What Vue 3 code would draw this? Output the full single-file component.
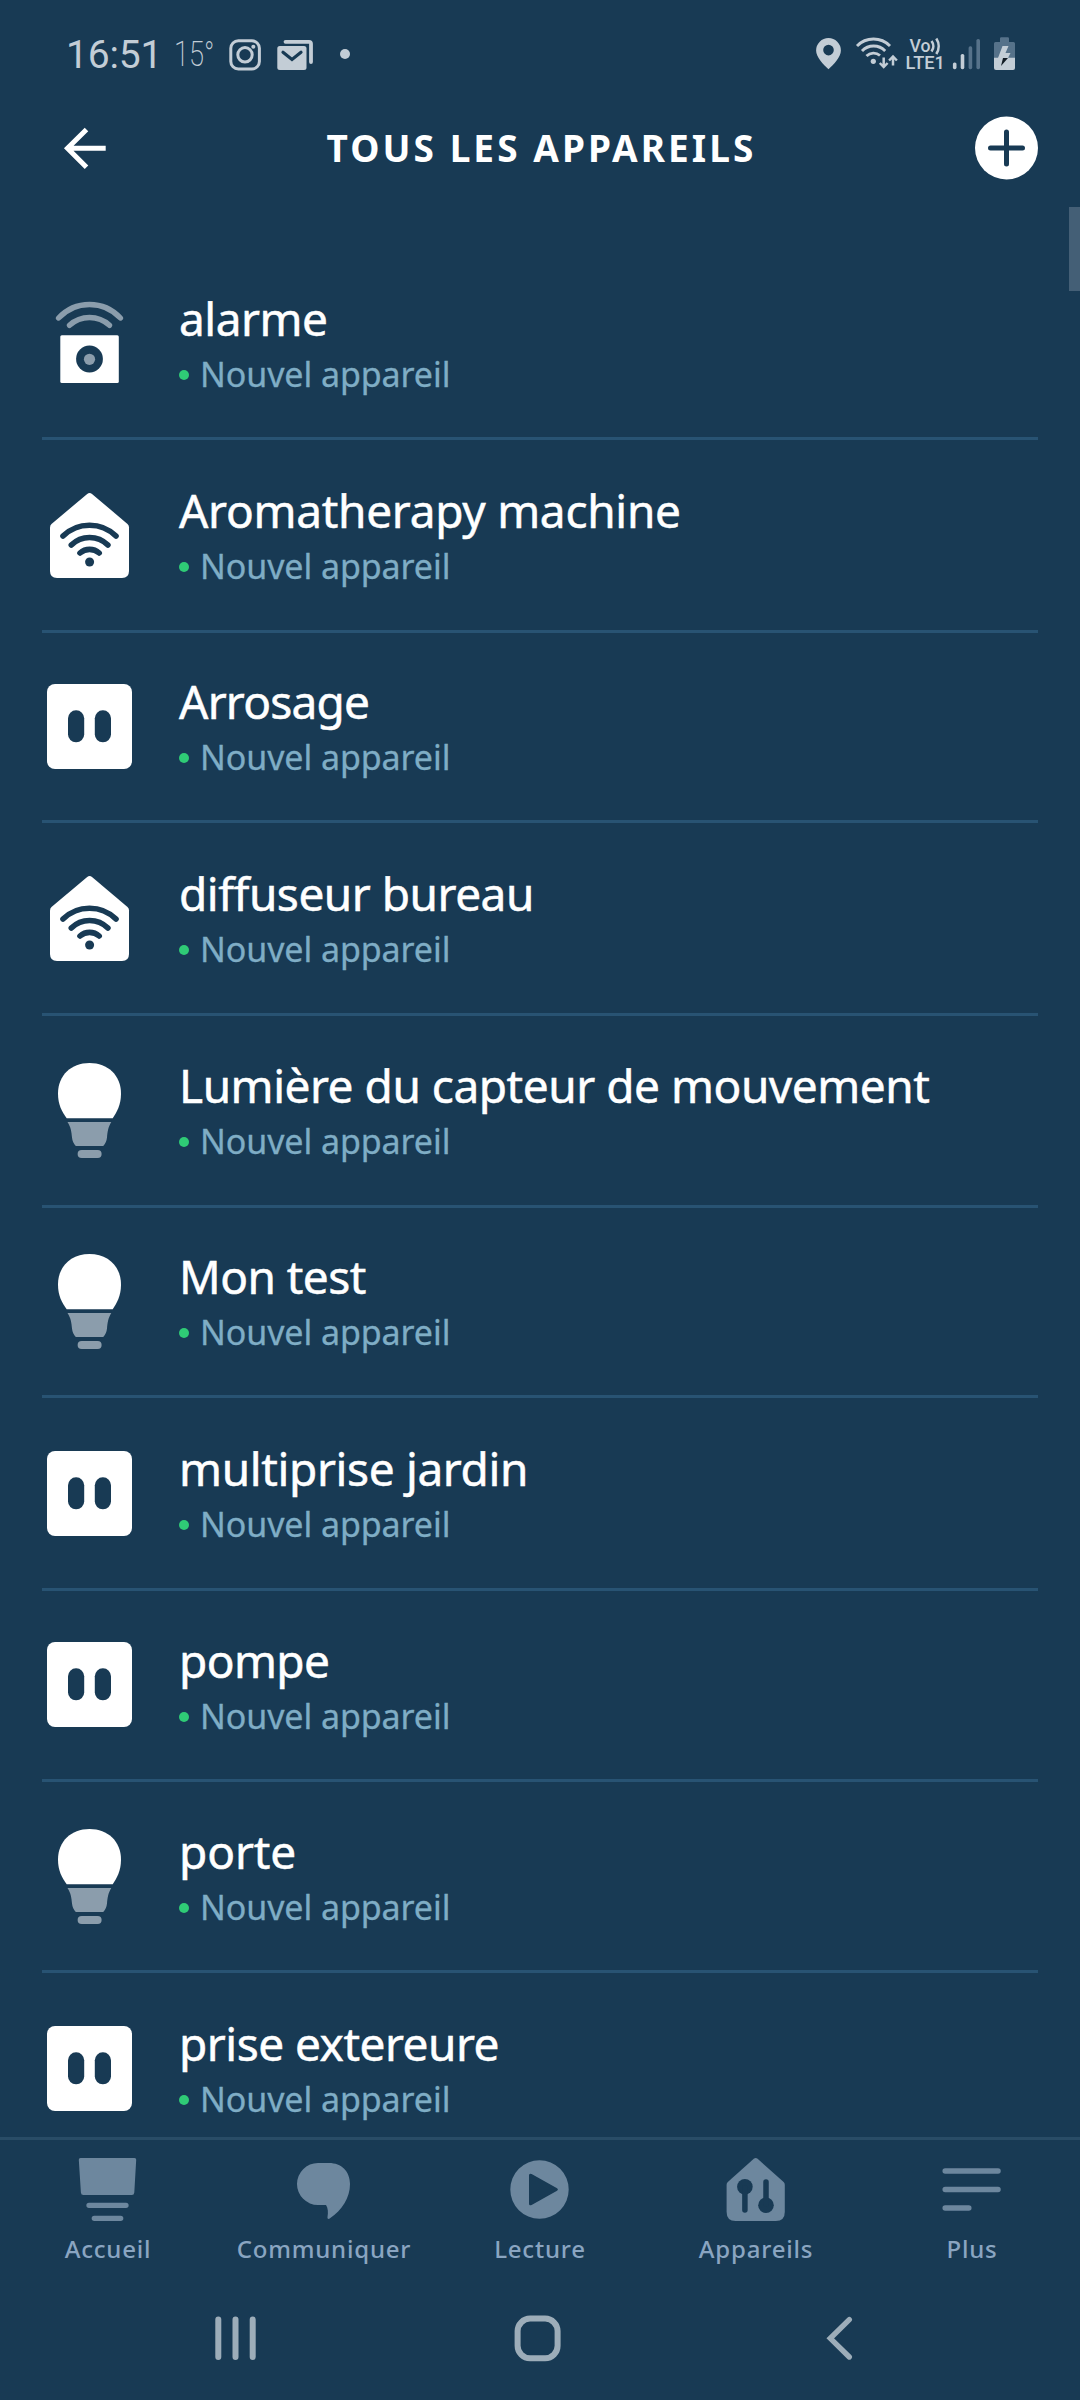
<script setup>
const devices = [
  { name: 'alarme', icon: 'camera', spacing: -0.5 },
  { name: 'Aromatherapy machine', icon: 'house', spacing: -0.28 },
  { name: 'Arrosage', icon: 'plug', spacing: -0.76 },
  { name: 'diffuseur bureau', icon: 'house', spacing: -0.48 },
  { name: 'Lumière du capteur de mouvement', icon: 'bulb', spacing: -0.47 },
  { name: 'Mon test', icon: 'bulb', spacing: -0.55 },
  { name: 'multiprise jardin', icon: 'plug', spacing: -0.36 },
  { name: 'pompe', icon: 'plug', spacing: -0.6 },
  { name: 'porte', icon: 'bulb', spacing: -0.1 },
  { name: 'prise extereure', icon: 'plug', spacing: -0.5 },
]
const tabs = [
  { label: 'Accueil', icon: 'home' },
  { label: 'Communiquer', icon: 'chat' },
  { label: 'Lecture', icon: 'play' },
  { label: 'Appareils', icon: 'devices' },
  { label: 'Plus', icon: 'more' },
]
</script>

<template>
  <div class="screen">
    <div class="status">
      <span class="clock">16:51</span>
      <span class="temp">15°</span>
      <svg class="insta" width="34" height="34" viewBox="228 38 34 34" fill="none" stroke="#c3cdd6" stroke-width="3">
        <rect x="230.8" y="40.8" width="28.6" height="28.2" rx="7.5" />
        <circle cx="245" cy="54.8" r="7.2" />
        <circle cx="253.3" cy="46.7" r="2" fill="#c3cdd6" stroke="none" />
      </svg>
      <svg class="mail" width="38" height="34" viewBox="276 38 38 34" fill="#c3cdd6">
        <rect x="277.3" y="46" width="29.2" height="24" rx="2.5" />
        <path d="M283 52.3l9 7.2 9-7.2" fill="none" stroke="#183a54" stroke-width="3.2" stroke-linecap="round" />
        <path d="M285.5 41.8H309q2 0 2 2V62" fill="none" stroke="#c3cdd6" stroke-width="3.8" stroke-linecap="round" />
      </svg>
      <i class="more-dot"></i>
      <svg class="right" width="202" height="40" viewBox="815 34 202 40" fill="#c3cdd6">
        <path fill-rule="evenodd" d="M828.5 38a12.4 12.4 0 0 0-12.4 12.4c0 6.6 7.1 13.8 12.4 18.8 5.3-5 12.4-12.2 12.4-18.8A12.4 12.4 0 0 0 828.5 38zm0 6.8a5.3 5.3 0 1 1 0 10.600 5.300 5.300 0 0 1 0-10.600z" />
        <g fill="none" stroke="#c3cdd6" stroke-width="2.9">
          <path d="M857 46a23 23 0 0 1 33 0M862 51a16 16 0 0 1 23.2 0M866.5 56a10 10 0 0 1 13.5-.5" />
          <path d="M883.7 57.5v9.500M879.8 63l3.9 4 3.9-4M893 65.5V56.5M889.100 60.500l3.900-4 3.900 4" stroke-width="2.5" />
          <path d="M931.5 41a8.500 8.500 0 0 1 0 10.500M936.300 38.500a14 14 0 0 1 0 15.500" stroke-width="2.6" />
        </g>
        <circle cx="873.3" cy="61.3" r="2.6" />
        <text x="909.5" y="51.5" textLength="21" lengthAdjust="spacingAndGlyphs" class="net">Vo</text>
        <text x="905.5" y="69" textLength="39.5" lengthAdjust="spacingAndGlyphs" class="net">LTE1</text>
        <rect x="952.9" y="62.5" width="3.6" height="6.7" rx="1.6" />
        <rect x="960.7" y="54" width="3.6" height="15.2" rx="1.6" />
        <g fill="#56728a">
          <rect x="968.6" y="46.3" width="3.6" height="22.9" rx="1.6" />
          <rect x="976.4" y="39" width="3.6" height="30.2" rx="1.6" />
          <path d="M1000 42v-3.500q0-1.200 1.200-1.200h6.600q1.200 0 1.200 1.200V42h4.500q1.500 0 1.500 1.500V58h-21V43.500q0-1.500 1.500-1.500z" />
        </g>
        <path d="M994 57.800h21V68q0 2-2 2h-17q-2 0-2-2z" />
        <path d="M1002.500 46h6l-3 7h5l-2.500 5h-10z" />
        <path d="M1003 58h5l-7 8z" fill="#111b24" />
      </svg>
    </div>

    <header class="header">
      <svg width="48" height="48" viewBox="61 124 48 48" fill="none" stroke="#fff" stroke-width="5">
        <path d="M105.700 148.300H68M86.500 129.400l-19 18.900 19 19" />
      </svg>
      <h1>TOUS LES APPAREILS</h1>
      <svg width="64" height="64" viewBox="0 0 64 64">
        <circle cx="31.500" cy="32" r="31.500" fill="#fff" />
        <path d="M31.500 16v32M15.500 32h32" stroke="#183a54" stroke-width="5" stroke-linecap="round" />
      </svg>
    </header>

    <main class="list">
      <div v-for="d in devices" :key="d.name" class="row">
        <svg class="dev" width="100" height="110" viewBox="0 0 100 110" fill="#fff">
          <g v-if="d.icon === 'camera'">
            <g fill="none" stroke="#8b9dac" stroke-width="5.400" stroke-linecap="round">
              <path d="M18.600 30a42 42 0 0 1 61.800 0" />
              <path d="M29.500 37.300a29.500 29.500 0 0 1 40 0" />
            </g>
            <rect x="20.300" y="47.300" width="58.500" height="47.700" rx="1.500" />
            <circle cx="49.500" cy="71" r="13.400" fill="#183a54" />
            <circle cx="49.500" cy="71.300" r="5.600" fill="#8b9dac" />
          </g>
          <g v-else-if="d.icon === 'house'">
            <path d="M47.200 13.900q2.400-1.800 4.800 0L87.500 44q1.500 1.300 1.500 3.500V91q0 7-7 7H17q-7 0-7-7V47.500q0-2.200 1.500-3.500z" />
            <g fill="none" stroke="#183a54" stroke-width="5.600" stroke-linecap="round">
              <path d="M23 56a38 38 0 0 1 53 0" />
              <path d="M31.300 65a26 26 0 0 1 36.600 0" />
              <path d="M40 73a14.500 14.500 0 0 1 19.200 0" />
            </g>
            <circle cx="49.600" cy="82" r="4.500" fill="#183a54" />
          </g>
          <g v-else-if="d.icon === 'plug'">
            <rect x="7" y="12" width="85" height="85" rx="8" />
            <rect x="28" y="38.300" width="16.200" height="32" rx="8" fill="#183a54" />
            <rect x="54.800" y="38.300" width="16.200" height="32" rx="8" fill="#183a54" />
          </g>
          <g v-else>
            <path d="M26.700 63.300C22 56.500 18 50 18 38.500 18 20.500 31 8 49.500 8S81 20.500 81 38.500C81 50 77 56.500 72.700 63.300z" />
            <g fill="#8b9dac">
              <path d="M27.500 67h43.800C68 72.500 67.500 77 67 82.500q-.6 5.500-3.800 8.500H35.800q-3.200-3-3.800-8.500C31.500 77 31 72.500 27.500 67z" />
              <rect x="37.600" y="95" width="24" height="8" rx="4" />
            </g>
          </g>
        </svg>
        <div class="text">
          <div class="name" :style="{ letterSpacing: d.spacing + 'px' }">{{ d.name }}</div>
          <div class="sub"><i></i><span>Nouvel appareil</span></div>
        </div>
      </div>
      <div class="scroll"></div>
    </main>

    <nav class="tabs">
      <div v-for="t in tabs" :key="t.label" class="tab">
        <svg width="72" height="72" viewBox="0 0 72 72" fill="#6d879e">
          <g v-if="t.icon === 'home'">
            <path d="M8.500 8h54q1.800 0 1.700 1.800L62.300 42.500q-.2 2.500-2.500 2.500H11.500q-2.500 0-2.600-2.500L6.800 9.800Q6.700 8 8.500 8z" />
            <path d="M17 55.300h37M22.300 68.300h26.400" stroke="#6d879e" stroke-width="5.300" stroke-linecap="round" />
          </g>
          <path v-else-if="t.icon === 'chat'" d="M30 13h11c12.500 0 21 8.500 21 21 0 14-8 26-20 34.300-1.500 1.200-2.800.5-2.500-1.300.8-4.500.6-9-1.500-12h-8a21 21 0 0 1 0-42z" />
          <path v-else-if="t.icon === 'play'" fill-rule="evenodd" d="M35.500 10.300a29.200 29.200 0 1 1 0 58.400 29.200 29.200 0 0 1 0-58.400zM25 25.500v28q0 2.800 2.600 1.400l25-13.900q2.600-1.500 0-3l-25-13.900Q25 22.700 25 25.500z" />
          <g v-else-if="t.icon === 'devices'">
            <path d="M33.800 8.700q1.900-1.500 3.800 0L63.600 32q1.200 1.200 1.200 3v27q0 9-9 9H15.600q-9 0-9-9V35q0-1.800 1.200-3z" />
            <g fill="#183a54" stroke="#183a54" stroke-linecap="round">
              <circle cx="24.900" cy="36.700" r="7.800" stroke="none" />
              <circle cx="46" cy="55.300" r="7.800" stroke="none" />
              <path d="M24.900 38v22M46 32v22" stroke-width="5.500" />
            </g>
          </g>
          <path v-else d="M9.200 21H62M9.200 39.600H62M9.200 58h23.600" stroke="#6d879e" stroke-width="5.500" stroke-linecap="round" />
        </svg>
        <span>{{ t.label }}</span>
      </div>
    </nav>

    <footer class="system">
      <svg width="1080" height="60" viewBox="0 2308 1080 60" fill="none" stroke="#9dadb9" stroke-linecap="round">
        <path d="M218.300 2319.500v37.500M235.500 2319.500v37.500M252.700 2319.500v37.500" stroke-width="6" />
        <rect x="517.600" y="2318.600" width="40" height="39.600" rx="12.500" stroke-width="6" />
        <path d="M849.300 2319.600l-19 18.700 19 18.700" stroke-width="5.400" />
      </svg>
    </footer>
  </div>
</template>

<style>
body { margin: 0; background: #183a54; }
</style>

<style scoped>
.screen {
  width: 1080px;
  height: 2400px;
  display: flex;
  flex-direction: column;
  overflow: hidden;
  background: #183a54;
  color: #fff;
  font-family: "Noto Sans", "Open Sans", sans-serif;
}
.status {
  height: 74px;
  padding: 34px 63px 0 66px;
  box-sizing: border-box;
  display: flex;
  color: #c3cdd6;
  font-family: Roboto, sans-serif;
}
.clock { width: 108px; font-size: 39px; line-height: 43px; letter-spacing: -.2px; white-space: nowrap; }
.temp { width: 54px; font-size: 35px; line-height: 41px; font-weight: 200; transform: scaleX(.78); transform-origin: 0 0; }
.insta { margin-top: 4px; }
.mail { margin: 4px 0 0 14px; }
.more-dot { width: 10px; height: 10px; border-radius: 50%; background: #c3cdd6; margin: 15px 0 0 26px; }
.right { margin-left: auto; }
.net { font: 500 18px Roboto, sans-serif; }
.header {
  height: 133px;
  box-sizing: border-box;
  padding: 15px 41px 0 61px;
  display: flex;
  align-items: center;
  justify-content: space-between;
}
.header h1 { margin: 0 0 0 -1px; font-size: 37px; line-height: 50px; font-weight: 700; letter-spacing: 3.050px; white-space: nowrap; }
.list {
  height: 1930px;
  padding: 41px 42px 0;
  box-sizing: border-box;
  position: relative;
  overflow: hidden;
}
.row {
  --icon: 40px;
  --text: 40px;
  height: 192px;
  box-sizing: border-box;
  border-bottom: 3px solid #285373;
  display: flex;
}
.row:nth-child(2), .row:nth-child(4), .row:nth-child(7) { height: 193px; }
.row:nth-child(3), .row:nth-child(6) { height: 190px; }
.row:nth-child(8), .row:nth-child(9) { height: 191px; }
.row:nth-child(3) { --icon: 39px; --text: 38px; }
.row:nth-child(5), .row:nth-child(8), .row:nth-child(9) { --icon: 39px; --text: 39px; }
.row:nth-child(6) { --icon: 38px; --text: 38px; }
.row:nth-child(7), .row:nth-child(10) { --icon: 41px; }
.dev { flex: none; margin: var(--icon) 0 0 -2px; }
.text { margin: var(--text) 0 0 39px; white-space: nowrap; }
.name { font-size: 46px; line-height: 60px; -webkit-text-stroke: .5px #fff; }
.sub { display: flex; margin-top: 1px; font-size: 34px; line-height: 50px; letter-spacing: -.08px; color: #7fadc5; -webkit-text-stroke: .3px #7fadc5; }
.sub i { width: 10px; height: 10px; border-radius: 50%; background: #2fcb76; margin: 21px 11px 0 0; }
.scroll { position: absolute; right: 0; top: 0; width: 11px; height: 84px; background: #445f76; }
.tabs { height: 143px; border-top: 3px solid #294c66; display: flex; }
.tab { width: 216px; padding-top: 10px; display: flex; flex-direction: column; align-items: center; }
.tab span { margin-top: 9px; font-size: 24px; line-height: 36px; font-weight: 500; letter-spacing: .8px; color: #8aa5c1; }
.system { padding-top: 25px; }
.system svg { display: block; }
</style>
